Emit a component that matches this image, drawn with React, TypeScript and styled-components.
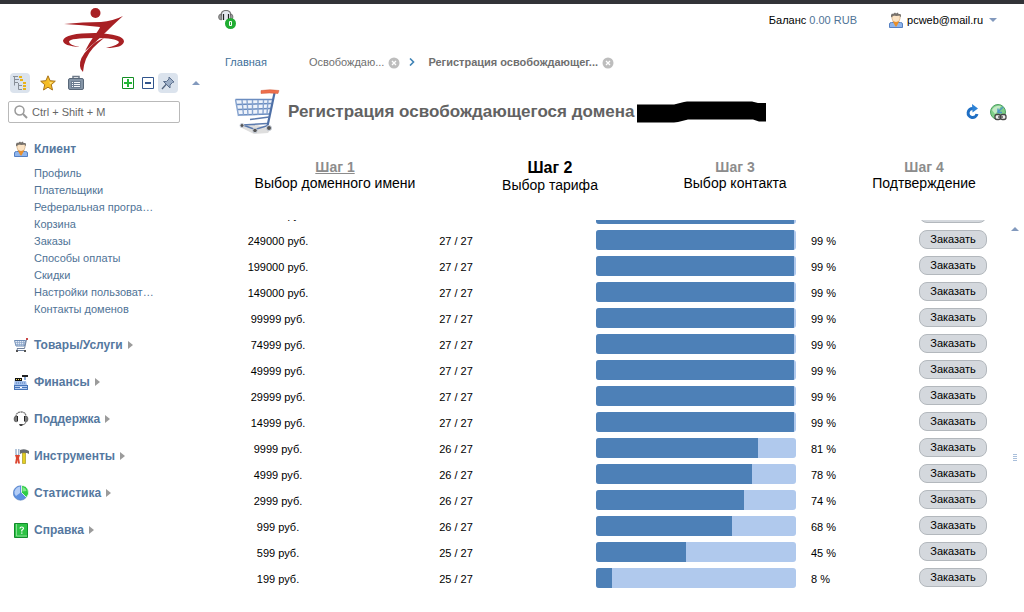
import React from "react";
import styled, { createGlobalStyle, css } from "styled-components";

const GlobalStyle = createGlobalStyle`
  * { box-sizing: border-box; }
  body {
    margin: 0;
    background: #fff;
    color: #000;
    font-family: "Liberation Sans", Arial, sans-serif;
    font-size: 11px;
    line-height: 16px;
  }
  a { color: inherit; text-decoration: none; }
  button, input { font-family: inherit; font-size: inherit; }
`;

const Page = styled.div`
  display: grid;
  grid-template-columns: 216px minmax(0, 1fr);
  min-height: 100vh;
  border-top: 4px solid #323338;
`;

const Sidebar = styled.aside`
  padding: 4px 8px 0;
`;

const Logo = styled.a`
  display: block;
  width: 62px;
  height: 64px;
  margin-left: 55px;
  svg { display: block; }
`;

const Toolbar = styled.div`
  display: flex;
  align-items: center;
  height: 22px;
  margin-left: 2px;
`;

const ToolGroup = styled.div<{ $gap: number }>`
  display: flex;
  align-items: center;
  gap: ${(p) => p.$gap}px;
  & + & { margin-left: 32px; }
`;

const ToolButton = styled.button<{ $active?: boolean }>`
  display: flex;
  align-items: center;
  justify-content: center;
  width: 20px;
  height: 20px;
  padding: 0;
  border: 0;
  border-radius: 4px;
  background: ${(p) => (p.$active ? "#dbe3ed" : "transparent")};
`;

const CollapseButton = styled(ToolButton)`
  margin-left: 8px;
`;

const Search = styled.label`
  display: flex;
  align-items: center;
  gap: 4px;
  width: 172px;
  height: 22px;
  margin-top: 7px;
  padding: 0 5px;
  border: 1px solid #b9b9b9;
  border-radius: 2px;
  input {
    min-width: 0;
    flex: 1;
    padding: 0;
    border: 0;
    outline: 0;
    color: #555;
    background: transparent;
  }
  input::placeholder { color: #666; opacity: 1; }
`;

const Menu = styled.nav`
  display: flex;
  flex-direction: column;
  gap: 21px;
  margin-top: 18px;
`;

const MenuHeading = styled.a`
  display: flex;
  align-items: center;
  gap: 5px;
  height: 16px;
  padding-left: 5px;
  color: #55789f;
  font-size: 12px;
  font-weight: bold;
`;

const MenuList = styled.ul`
  margin: 8px 0 -2px;
  padding: 0 0 0 26px;
  list-style: none;
  color: #4f7396;
  line-height: 17px;
`;

const Main = styled.main`
  display: flex;
  flex-direction: column;
  min-width: 0;
`;

const Header = styled.header`
  display: flex;
  align-items: center;
  height: 31px;
  padding: 0 27px 0 2px;
`;

const SupportButton = styled.button`
  margin-right: auto;
  padding: 0;
  border: 0;
  background: none;
  svg { display: block; }
`;

const Balance = styled.span`
  margin-right: 32px;
  a { color: #4f7396; }
`;

const UserButton = styled.button`
  display: flex;
  align-items: center;
  gap: 4px;
  padding: 0;
  border: 0;
  background: none;
  color: #000;
  svg:last-child { margin-left: 2px; }
`;

const Crumbs = styled.nav`
  display: flex;
  align-items: center;
  height: 16px;
  margin-top: 19px;
  padding-left: 9px;
  svg { display: block; }
`;

const Crumb = styled.span<{ $tone: "home" | "past" | "current" }>`
  display: flex;
  align-items: center;
  gap: 4px;
  font-weight: ${(p) => (p.$tone === "current" ? "bold" : "normal")};
  color: ${(p) => (p.$tone === "home" ? "#3e6f99" : "#6f6f6f")};
  ${(p) => p.$tone === "home" && css`margin-right: 42px;`}
  ${(p) => p.$tone === "past" && css`margin-right: 9px;`}
  ${(p) => p.$tone === "current" && css`margin-left: 13px;`}
`;

const CloseButton = styled.button`
  padding: 2px 0 0;
  border: 0;
  background: none;
`;

const TitleRow = styled.div`
  display: flex;
  align-items: center;
  height: 46px;
  margin-top: 19px;
  padding: 0 17px 0 18px;
  svg { flex: none; }
`;

const Title = styled.h1`
  display: flex;
  align-items: center;
  gap: 3px;
  margin: 0 auto 0 8px;
  color: #626262;
  font-size: 17px;
  line-height: 20px;
  white-space: nowrap;
`;

const TitleActions = styled.div`
  display: flex;
  gap: 9px;
`;

const IconButton = styled.button`
  padding: 0;
  border: 0;
  background: none;
  svg { display: block; }
`;

const Steps = styled.ol`
  display: grid;
  grid-template-columns: 238fr 192fr 178fr 200fr;
  align-items: start;
  height: 34px;
  margin: 24px 0 0;
  padding: 0;
  list-style: none;
  text-align: center;
`;

const Step = styled.li<{ $current?: boolean }>`
  font-size: 14px;
  line-height: 16px;
  strong {
    display: block;
    color: ${(p) => (p.$current ? "#000" : "#8c8c8c")};
    font-size: ${(p) => (p.$current ? 16 : 14)}px;
    line-height: ${(p) => (p.$current ? 18 : 16)}px;
  }
  a { text-decoration: underline; }
`;

const ListArea = styled.section`
  display: flex;
  margin-top: 27px;
`;

const Viewport = styled.div`
  flex: 1;
  min-width: 0;
  overflow: hidden;
`;

const TariffTable = styled.table`
  width: 100%;
  margin-top: -19px;
  border-collapse: collapse;
  table-layout: fixed;
  td { height: 26px; padding: 0; }
`;

const Col = styled.col<{ $width?: number }>`
  width: ${(p) => (p.$width ? `${p.$width}px` : "auto")};
`;

const Cell = styled.td<{ $centered?: boolean }>`
  text-align: ${(p) => (p.$centered ? "center" : "left")};
`;

const TextCell = styled(Cell)`
  && { padding-top: 2px; }
`;

const Bar = styled.div`
  width: 200px;
  height: 20px;
  margin-left: 24px;
  overflow: hidden;
  border-radius: 3px;
  background: #b0c9ed;
`;

const BarFill = styled.div`
  height: 100%;
  background: #4d80b7;
`;

const OrderButton = styled.button`
  display: block;
  width: 68px;
  height: 19px;
  margin: 0 auto 1px;
  padding: 0;
  border: 1px solid #b3b8bd;
  border-radius: 8px;
  background: #d4d8dd;
  color: #000;
  line-height: 15px;
`;

const ScrollRail = styled.div`
  display: flex;
  flex-direction: column;
  align-items: center;
  width: 16px;
  padding: 7px 2px 0 0;
  svg { display: block; }
`;

const Grip = styled.div`
  width: 4px;
  height: 8px;
  margin-top: 223px;
  background: repeating-linear-gradient(#a9bfdb 0 1px, transparent 1px 2px);
`;

const UserIcon = () => (
  <svg width="14" height="16" viewBox="0 0 14 16" aria-hidden="true">
    <path d="M.5 15.500V12q0-1.500 2-1.500h9q2 0 2 1.500v3.500z" fill="#8fb5ec" stroke="#5580c2" />
    <path d="M3 3.500v3Q3 10 7 10.500q4-.5 4-4v-3z" fill="#fbe3c4" stroke="#d0ab80" strokeWidth=".7" />
    <path d="M3.500 9Q7 11 10.500 9L7.500 14.500h-1z" fill="#e98f2a" />
    <path d="M2 5.500V3l1-1.500 1 .5L6 .5l1 1L9 .5l.5 1.500L11.500 2l.5 1.500v2l-1.500-2-3 .5L5 3.500z" fill="#77726d" />
  </svg>
);

const SmallCartIcon = () => (
  <svg width="14" height="14" viewBox="0 0 14 14" fill="none" aria-hidden="true">
    <path d="M.5 2.500h11l-1 5.500H2z" fill="#e2eaf5" stroke="#6d8cb5" />
    <path d="M1 4.500h10M1.500 6.500h9M3.500 3v5M5.500 3v5M7.500 3v5M9.500 3v5" stroke="#8ba5c9" strokeWidth=".7" />
    <path d="M12.500 1.500l-2 9H3M3.500 10L3 12.500h8" stroke="#6f819d" />
    <path d="M12 0h2v2h-2z" fill="#c94747" />
    <path d="M2 12h2v2H2zM10 12h2v2h-2z" fill="#555" />
  </svg>
);

const RegisterIcon = () => (
  <svg width="14" height="15" viewBox="0 0 14 15" aria-hidden="true">
    <path d="M8 0h6v2H8z" fill="#222" />
    <path d="M10 2h2v3h-2z" fill="#8ba9d4" />
    <path d="M1 3h7v3h4l1 4H0z" fill="#a3c0ec" />
    <path d="M1 3h7v3H1z" fill="#111" />
    <path d="M2 4h1v1H2zM4 4h1v1H4zM6 4h1v1H6z" fill="#f1d75e" />
    <path d="M2 8h10" stroke="#587fb9" strokeDasharray="1 1" />
    <path d="M0 10h14v5H0z" fill="#4674b8" />
    <path d="M1 11h12v1H1zM1 13h12v1H1z" fill="#b4ccf0" />
    <path d="M6 12h2v1H6z" fill="#fff" />
  </svg>
);

const HeadsetIcon = () => (
  <svg width="16" height="16" viewBox="0 0 16 16" fill="none" aria-hidden="true">
    <path d="M3 6Q3 1 8 1t5 5" stroke="#777" strokeWidth="1.300" strokeDasharray="2 .5" />
    <path d="M3.500 5v6Q1 11 1 8t2.500-3M12.500 5v6Q15 11 15 8t-2.500-3" fill="#777" stroke="#444" strokeWidth=".5" />
    <path d="M4.500 5v5.500M11.500 5v5.500" stroke="#222" />
    <path d="M13 11q-1 3-4 3" stroke="#777" />
    <path d="M6 13h4l-1 2H7z" fill="#444" />
  </svg>
);

const ToolsIcon = () => (
  <svg width="15" height="15" viewBox="0 0 15 15" aria-hidden="true">
    <path d="M2 0v5l1 2M4.800 0v5l-1 2" stroke="#91abc9" strokeWidth="1.300" fill="none" />
    <path d="M1 6h5l-1 3 1 5.500H4L3.500 11 3 14.500H1L2 9z" fill="#db452f" />
    <path d="M6 1q4-1.500 7 0l2 1v3l-2-1H8L6 5z" fill="#666b70" />
    <path d="M8.500 4h3v10.500h-3z" fill="#e4cf23" stroke="#a8981f" strokeWidth=".7" />
  </svg>
);

const PieIcon = () => (
  <svg width="16" height="16" viewBox="0 0 16 16" aria-hidden="true">
    <circle cx="7.500" cy="8" r="7.200" fill="#5c90e0" stroke="#4672b7" strokeWidth=".6" />
    <path d="M1.500 6.500Q3 2 7 1.500V8l-4 3Q1 9 1.500 6.500" fill="#b3cdf6" />
    <path d="M8.500 7.500V.5a7 7 0 0 1 5 12z" fill="#2fce45" stroke="#fff" strokeWidth=".8" />
    <path d="M9.500 2q3.500 1 4 4l-4 .5z" fill="#83e68e" />
  </svg>
);

const HelpIcon = () => (
  <svg width="14" height="15" viewBox="0 0 14 15" fill="none" aria-hidden="true">
    <path d="M.5.500h13v14H.5z" fill="#2cc244" stroke="#128b2b" />
    <path d="M2.500 1v12H13" stroke="#86dd92" />
    <path d="M6 5.500q0-1.500 1.700-1.500t1.800 1.300q0 1-1.700 2v1.200M7.800 9.500v1.300" stroke="#fff" strokeWidth="1.200" />
  </svg>
);

const Triangle = ({ dir, color = "#8299bd" }: { dir: "up" | "down" | "right"; color?: string }) => (
  <svg width={dir === "right" ? 5 : 8} height={dir === "right" ? 8 : 4} viewBox={dir === "right" ? "0 0 5 8" : "0 0 8 4"} aria-hidden="true">
    <path d={{ up: "M0 4l4-4 4 4z", down: "M0 0h8L4 4z", right: "M0 0l5 4-5 4z" }[dir]} fill={color} />
  </svg>
);

const CloseIcon = () => (
  <svg width="12" height="12" viewBox="0 0 12 12" aria-hidden="true">
    <circle cx="6" cy="6" r="5.500" fill="#bdbdbd" />
    <path d="M4 4l4 4M8 4L4 8" stroke="#fff" strokeWidth="1.300" />
  </svg>
);

const submenu = [
  "Профиль", "Плательщики", "Реферальная програ…", "Корзина", "Заказы",
  "Способы оплаты", "Скидки", "Настройки пользоват…", "Контакты доменов",
];

const sections = [
  { label: "Товары/Услуги", icon: <SmallCartIcon /> },
  { label: "Финансы", icon: <RegisterIcon /> },
  { label: "Поддержка", icon: <HeadsetIcon /> },
  { label: "Инструменты", icon: <ToolsIcon /> },
  { label: "Статистика", icon: <PieIcon /> },
  { label: "Справка", icon: <HelpIcon /> },
];

const IconSlot = styled.span`
  display: flex;
  align-items: center;
  justify-content: center;
  width: 16px;
  svg { flex: none; }
`;

const tariffs: [number, number, number][] = [
  [299000, 27, 99], [249000, 27, 99], [199000, 27, 99], [149000, 27, 99],
  [99999, 27, 99], [74999, 27, 99], [49999, 27, 99], [29999, 27, 99],
  [14999, 27, 99], [9999, 26, 81], [4999, 26, 78], [2999, 26, 74],
  [999, 26, 68], [599, 25, 45], [199, 25, 8],
];

export default function App() {
  return (
    <>
      <GlobalStyle />
      <Page>
        <Sidebar>
          <Logo href="#" aria-label="Главная страница">
            <svg width="62" height="64" viewBox="0 0 62 64" fill="#a82024">
              <circle cx="32.500" cy="5" r="5" />
              <path d="M1 16Q20 14 38 14Q50 13 60 8Q50 17 43 24Q33 34 22 43Q26 35 31 28Q36 22 37 19Q20 17 1 16z" />
              <path d="M17 39Q0 38 0 32.500Q2 25 32 25Q61 26 61 33.500Q60 40 43 40Q56 37 56 34Q53 30 32 30Q7 30 6 33.500Q6 37 17 39z" />
              <path d="M41 30Q34 32 26 40Q16 50 17 58Q17 61 20 64Q21 50 30 40Q36 34 41 30z" />
            </svg>
          </Logo>
          <Toolbar>
            <ToolGroup $gap={8}>
              <ToolButton $active aria-label="Меню">
                <svg width="16" height="16" viewBox="0 0 16 16" fill="none">
                  <path d="M1 1.500h5M2.500 2v8.500M2.500 4.500H7M2.500 7.500H6M6.500 8v6.500M6.500 10.500H10M6.500 14.500H10" stroke="#888f98" />
                  <path d="M7 1h3v2H7zM8 4h3v2H8zM11 7h3v2h-3zM11 10h3v2h-3zM11 13h3v2h-3z" fill="#e8b31c" />
                </svg>
              </ToolButton>
              <ToolButton aria-label="Избранное">
                <svg width="16" height="16" viewBox="0 0 16 16">
                  <path d="M8 .8l2.100 4.900 5.200.5-4 3.500 1.200 5.300L8 12.200 3.500 15l1.200-5.300-4-3.500 5.200-.5z" fill="#f5bd26" stroke="#a9731a" />
                  <path d="M8 3l1 4 4 .2-3 2z" fill="#ffe98d" />
                </svg>
              </ToolButton>
              <ToolButton aria-label="История">
                <svg width="16" height="16" viewBox="0 0 16 16" fill="none">
                  <path d="M5 4V1.500h6V4" stroke="#6d7988" strokeWidth="1.500" />
                  <rect x=".5" y="3.500" width="15" height="11" rx="1.500" fill="#8595a7" stroke="#596879" />
                  <path d="M3 6h10v7H3z" fill="#6c7d91" />
                  <path d="M4 7.500h1M6 7.500h6M4 9.500h1M6 9.500h6M4 11.500h1M6 11.500h6" stroke="#f5f8fb" />
                </svg>
              </ToolButton>
            </ToolGroup>
            <ToolGroup $gap={0}>
              <ToolButton aria-label="Развернуть">
                <svg width="12" height="12" viewBox="0 0 12 12">
                  <path d="M.5.500h11v11H.5z" fill="#fff" stroke="#148e25" />
                  <path d="M6 2v8M2 6h8" stroke="#22b835" strokeWidth="2" />
                </svg>
              </ToolButton>
              <ToolButton aria-label="Свернуть">
                <svg width="12" height="12" viewBox="0 0 12 12">
                  <path d="M.5.500h11v11H.5z" fill="#fff" stroke="#31558d" />
                  <path d="M3 6h6" stroke="#31558d" strokeWidth="2" />
                </svg>
              </ToolButton>
              <ToolButton $active aria-label="Закрепить">
                <svg width="14" height="14" viewBox="0 0 14 14">
                  <path d="M1 13l4.500-5" stroke="#52647e" strokeWidth="1.300" />
                  <path d="M8 1l5 5-1.500.5-2.500 2.500v3L2.500 5.500h3L8 3z" fill="#9dafc7" stroke="#5b6e8c" />
                </svg>
              </ToolButton>
            </ToolGroup>
            <CollapseButton aria-label="Скрыть панель"><Triangle dir="up" /></CollapseButton>
          </Toolbar>
          <Search>
            <svg width="14" height="14" viewBox="0 0 14 14" fill="none" stroke="#999" aria-hidden="true">
              <circle cx="5.500" cy="5.500" r="4.500" strokeWidth="1.500" />
              <path d="M9 9l4 4" strokeWidth="2" />
            </svg>
            <input type="text" placeholder="Ctrl + Shift + M" aria-label="Поиск" />
          </Search>
          <Menu>
            <div>
              <MenuHeading href="#"><IconSlot><UserIcon /></IconSlot>Клиент</MenuHeading>
              <MenuList>
                {submenu.map((item) => <li key={item}><a href="#">{item}</a></li>)}
              </MenuList>
            </div>
            {sections.map((s) => (
              <MenuHeading href="#" key={s.label}>
                <IconSlot>{s.icon}</IconSlot>{s.label}<Triangle dir="right" color="#9b9b9b" />
              </MenuHeading>
            ))}
          </Menu>
        </Sidebar>

        <Main>
          <Header>
            <SupportButton aria-label="Обращения: 0">
              <svg width="19" height="20" viewBox="0 0 19 20" fill="none">
                <path d="M3 10V6Q3 0 8 0t5 6v4z" fill="#e4e8ef" />
                <path d="M3 6Q3 .5 8 .5t5 5.500" stroke="#777" strokeWidth="1.200" />
                <path d="M3.500 4v6Q.5 10 .5 7t3-3M12.500 4v6Q15 10 15 7t-2.500-3" fill="#999" stroke="#555" strokeWidth=".6" />
                <path d="M5.500 4v6M10.500 4v6" stroke="#222" strokeWidth="1.200" />
                <circle cx="12.500" cy="13.500" r="5.500" fill="#20ad32" />
                <path d="M11.500 11.500h2v4h-2z" stroke="#fff" />
              </svg>
            </SupportButton>
            <Balance>Баланс <a href="#">0.00 RUB</a></Balance>
            <UserButton><UserIcon />pcweb@mail.ru<Triangle dir="down" /></UserButton>
          </Header>

          <Crumbs aria-label="Навигация">
            <Crumb $tone="home"><a href="#">Главная</a></Crumb>
            <Crumb $tone="past">
              <a href="#">Освобождаю...</a>
              <CloseButton aria-label="Закрыть вкладку"><CloseIcon /></CloseButton>
            </Crumb>
            <svg width="6" height="8" viewBox="0 0 6 8" fill="none" aria-hidden="true">
              <path d="M1 .5L4.500 4 1 7.500" stroke="#3f83b5" strokeWidth="1.600" />
            </svg>
            <Crumb $tone="current">
              Регистрация освобождающег...
              <CloseButton aria-label="Закрыть вкладку"><CloseIcon /></CloseButton>
            </Crumb>
          </Crumbs>

          <TitleRow>
            <svg width="46" height="46" viewBox="0 0 46 46" fill="none" aria-hidden="true">
              <path d="M6 38l14-3 17 5-3 4-14 1z" fill="#dedede" />
              <path d="M1.500 10.500L39 10.500 36 25.500 5 27z" fill="#eef3fb" />
              <path d="M1.500 10.500H39M2.500 15.500l35-1M3.500 20.500l33-1M4.500 26l31-1" stroke="#6b8dc0" strokeWidth="1.500" />
              <path d="M1.500 10.500L4.500 27M8 11l1.500 15M13 11l1 15M18.500 11v15M24 11v15M29.500 11l-.5 14M34 11l-1 14" stroke="#86a3cf" strokeWidth="1.400" />
              <path d="M40.500 4L33.500 37" stroke="#4d6fa6" strokeWidth="2.200" />
              <path d="M35 28L16 30.500M8 36l25-1.500M9 36l12 4.500 13-4" stroke="#5b7aad" strokeWidth="1.500" />
              <path d="M27 1.500Q36 0 45 1.500l-1 3Q35 3.500 27 4.500z" fill="#ee6f4c" stroke="#cf5a38" strokeWidth=".5" />
              <g fill="#555" stroke="#cbd2dd"><circle cx="8" cy="36.500" r="2" /><circle cx="21" cy="41.500" r="2.300" /><circle cx="35" cy="39" r="2.500" /></g>
            </svg>
            <Title>
              Регистрация освобождающегося домена
              <svg width="129" height="22" viewBox="0 0 129 22" aria-hidden="true">
                <path d="M0 3.500h37L47 1l3-.5h65l6 1.500h8v18.500h-7l-6-2H51l-10 2.500-4 .5H0z" fill="#000" />
              </svg>
            </Title>
            <TitleActions>
              <IconButton aria-label="Обновить">
                <svg width="16" height="16" viewBox="0 0 16 16" fill="none">
                  <path d="M8 4.500A4.500 4.500 0 1 0 12 10" stroke="#1f6fc4" strokeWidth="3" />
                  <path d="M7 0l6 4.500-5.500 4z" fill="#2c82d6" />
                </svg>
              </IconButton>
              <IconButton aria-label="Ссылка">
                <svg width="17" height="17" viewBox="0 0 17 17" fill="none">
                  <circle cx="8" cy="8" r="7.500" fill="#7fcf88" stroke="#4ea062" />
                  <path d="M2 6q3-5 9-4L8 7l-3 3z" fill="#c3e9c4" />
                  <path d="M13 3L8 8M8 4.500V8.500h4" stroke="#4f95c4" strokeWidth="1.400" />
                  <rect x="5" y="10.500" width="5.500" height="5" rx="2" fill="#eee" stroke="#444" strokeWidth="1.300" />
                  <rect x="10.500" y="10.500" width="5.500" height="5" rx="2" fill="#eee" stroke="#444" strokeWidth="1.300" />
                  <path d="M8 13h5" stroke="#444" strokeWidth="1.300" />
                </svg>
              </IconButton>
            </TitleActions>
          </TitleRow>

          <Steps>
            <Step><strong><a href="#">Шаг 1</a></strong>Выбор доменного имени</Step>
            <Step $current><strong>Шаг 2</strong>Выбор тарифа</Step>
            <Step><strong>Шаг 3</strong>Выбор контакта</Step>
            <Step><strong>Шаг 4</strong>Подтверждение</Step>
          </Steps>

          <ListArea>
            <Viewport>
              <TariffTable>
                <colgroup>
                  <Col $width={124} /><Col /><Col $width={239} /><Col $width={87} /><Col $width={110} />
                </colgroup>
                <tbody>
                  {tariffs.map(([price, count, percent]) => (
                    <tr key={price}>
                      <TextCell $centered>{price} руб.</TextCell>
                      <TextCell $centered>{count} / 27</TextCell>
                      <Cell><Bar><BarFill style={{ width: `${percent}%` }} /></Bar></Cell>
                      <TextCell>{percent} %</TextCell>
                      <Cell><OrderButton>Заказать</OrderButton></Cell>
                    </tr>
                  ))}
                </tbody>
              </TariffTable>
            </Viewport>
            <ScrollRail>
              <Triangle dir="up" />
              <Grip />
            </ScrollRail>
          </ListArea>
        </Main>
      </Page>
    </>
  );
}
